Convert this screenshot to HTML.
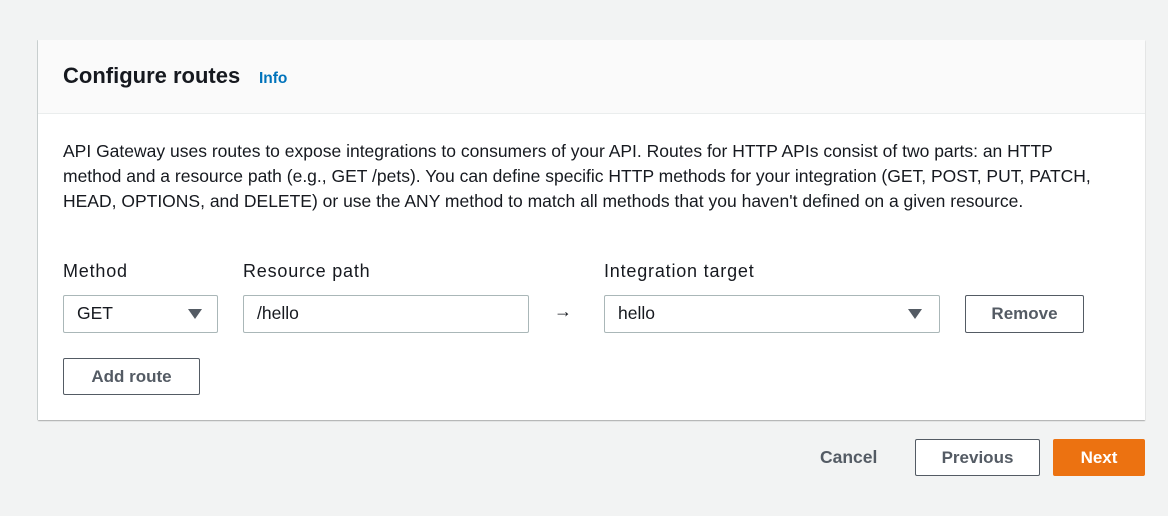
<!DOCTYPE html>
<html><head><style>
body{margin:0;width:1168px;height:516px;background:#f2f3f3;font-family:"Liberation Sans",sans-serif;color:#16191f;position:relative;overflow:hidden}
.card{position:absolute;left:38px;top:40px;width:1107px;height:380px;background:#fff;box-shadow:0 1px 1px rgba(0,0,0,.3),-1px 0 0 #d5dbdb}
.hdr{height:73px;background:#fafafa;border-bottom:1px solid #eaeded;position:relative}
.a{position:absolute;white-space:nowrap}
.box{position:absolute;border:1px solid #aab7b8;border-radius:2px;background:#fff;box-sizing:border-box;font-size:17.5px;line-height:35px;padding-left:13px}
.tri{position:absolute;width:0;height:0;border-left:7px solid transparent;border-right:7px solid transparent;border-top:10px solid #545b64;top:13px}
.btn{position:absolute;box-sizing:border-box;border:1px solid #545b64;border-radius:2px;background:#fff;text-align:center;font-weight:bold;color:#545b64;font-size:17px;line-height:35px}
</style></head><body>
<div class="card">
<div class="hdr">
<div class="a" style="left:25px;top:23px;font-size:22px;font-weight:bold">Configure routes</div>
<div class="a" style="left:221px;top:30px;font-size:15.5px;font-weight:bold;color:#0073bb">Info</div>
</div>
<div class="a" style="left:25px;top:99px;font-size:17.5px;line-height:25px;color:#16191f">API Gateway uses routes to expose integrations to consumers of your API. Routes for HTTP APIs consist of two parts: an HTTP<br>method and a resource path (e.g., GET /pets). You can define specific HTTP methods for your integration (GET, POST, PUT, PATCH,<br>HEAD, OPTIONS, and DELETE) or use the ANY method to match all methods that you haven't defined on a given resource.</div>
<div class="a" style="left:25px;top:221px;font-size:18px;letter-spacing:.8px">Method</div>
<div class="a" style="left:205px;top:221px;font-size:18px;letter-spacing:.8px">Resource path</div>
<div class="a" style="left:566px;top:221px;font-size:18px;letter-spacing:.8px">Integration target</div>
<div class="box" style="left:25px;top:255px;width:155px;height:38px">GET<div class="tri" style="left:124px"></div></div>
<div class="box" style="left:205px;top:255px;width:286px;height:38px">/hello</div>
<div class="a" style="left:516px;top:261px;font-size:18px">→</div>
<div class="box" style="left:566px;top:255px;width:336px;height:38px">hello<div class="tri" style="left:303px"></div></div>
<div class="btn" style="left:927px;top:255px;width:119px;height:38px">Remove</div>
<div class="btn" style="left:25px;top:318px;width:137px;height:37px">Add route</div>
</div>
<div class="a" style="left:820px;top:447px;font-size:17.5px;font-weight:bold;color:#545b64">Cancel</div>
<div class="btn" style="left:915px;top:439px;width:125px;height:37px">Previous</div>
<div class="btn" style="left:1053px;top:439px;width:92px;height:37px;background:#ec7211;border-color:#ec7211;color:#fff">Next</div>
</body></html>
